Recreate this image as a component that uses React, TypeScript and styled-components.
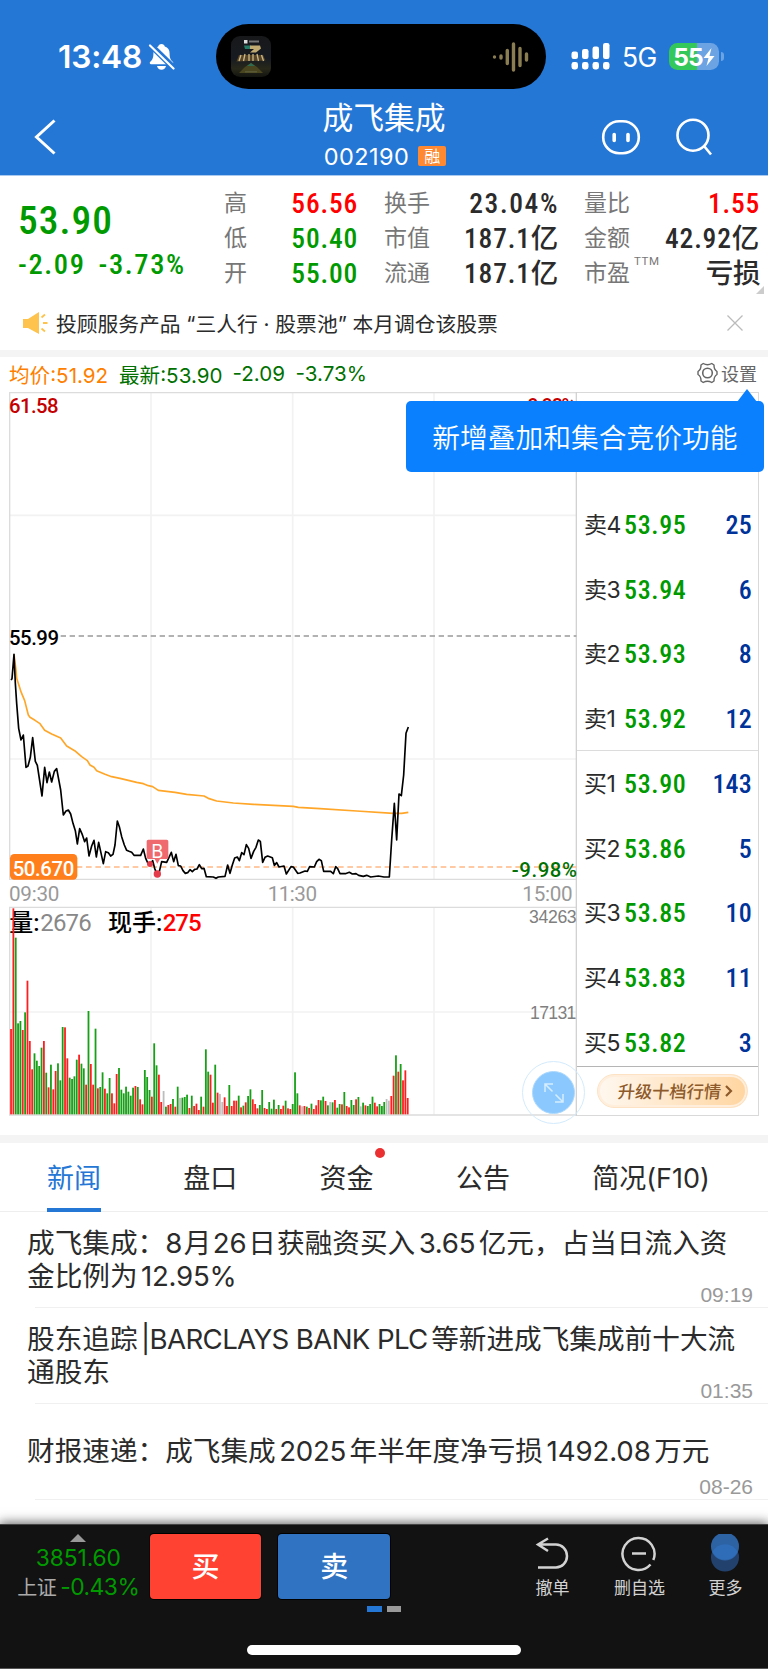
import React from "react";
import styled, { createGlobalStyle } from "styled-components";

const UI = `Inter, "Noto Sans CJK SC", sans-serif`;
const NUM = `Roboto, "Noto Sans CJK SC", sans-serif`;

const C = {
  blue: "#2577d6",
  green: "#009a00",
  darkGreen: "#007000",
  red: "#ff0000",
  orange: "#ff7f1c",
  ink: "#2b2b2b",
};

const GlobalStyle = createGlobalStyle`
  * { box-sizing: border-box; }
  body { margin: 0; background: #fff; font-family: ${UI}; color: ${C.ink}; }
`;

const Page = styled.div`
  width: 768px;
  height: 1669px;
  display: flex;
  flex-direction: column;
  overflow: hidden;
  white-space: nowrap;
`;

/* ---------- header ---------- */
const Header = styled.header`
  height: 176px;
  background: ${C.blue};
  border-bottom: 1px solid #a9c9ee;
  color: #fff;
`;
const StatusBar = styled.div`
  display: flex;
  align-items: center;
  height: 89px;
  padding: 24px 0 0 58px;
`;
const Clock = styled.div`
  display: flex;
  align-items: center;
  gap: 6px;
  width: 157.5px;
  font-size: 31.7px;
  font-weight: 600;
  letter-spacing: -0.2px;
`;
const Island = styled.div`
  display: flex;
  align-items: center;
  justify-content: space-between;
  width: 330.5px;
  height: 65px;
  padding: 0 17px 0 15px;
  border-radius: 33px;
  background: #000;
`;
const Signals = styled.div`
  display: flex;
  align-items: center;
  padding-left: 25px;
  font-size: 26.5px;
`;
const Network = styled.span`
  width: 47px;
  margin-left: 12px;
  letter-spacing: -0.6px;
`;
const Battery = styled.div`
  display: flex;
  align-items: center;
  justify-content: center;
  width: 50px;
  height: 27px;
  border-radius: 8.5px;
  background: linear-gradient(90deg, #34c759 0 55%, #6ba3e3 55%);
  font-size: 24.5px;
  font-weight: 700;
  letter-spacing: -0.8px;
`;
const BatteryCap = styled.div`
  width: 3px;
  height: 9px;
  margin-left: 1.5px;
  border-radius: 0 4px 4px 0;
  background: #6ba3e3;
`;
const NavBar = styled.div`
  display: grid;
  grid-template-columns: 1fr auto 1fr;
  align-items: center;
  height: 86px;
  padding: 10px 55px 0 33px;
`;
const NavTitle = styled.div`
  display: flex;
  flex-direction: column;
  align-items: center;
  margin-left: 22px;
`;
const StockName = styled.div`
  height: 38px;
  line-height: 38px;
  font-size: 30.8px;
`;
const StockCode = styled.div`
  display: flex;
  align-items: center;
  gap: 9px;
  height: 38px;
  padding-left: 2px;
  font-size: 23.5px;
  letter-spacing: 0.45px;
`;
const MarginBadge = styled.span`
  width: 28px;
  height: 20px;
  border-radius: 2px;
  background: #ff8833;
  font-size: 16px;
  line-height: 20px;
  letter-spacing: 0;
  text-align: center;
`;
const NavActions = styled.div`
  display: flex;
  justify-content: flex-end;
  align-items: center;
  gap: 34px;
`;

/* ---------- quote ---------- */
const QuoteWrap = styled.div`
  position: relative;
`;
const Quote = styled.section`
  display: flex;
  height: 124px;
  padding: 9.5px 9px 0 18px;
  font-family: ${NUM};
  font-stretch: 87%;
`;
const QuoteMain = styled.div`
  width: 206px;
  color: ${C.green};
  font-weight: 500;
`;
const LastPrice = styled.div`
  height: 57px;
  padding-top: 6px;
  font-size: 39.5px;
  line-height: 57px;
  letter-spacing: 1px;
`;
const Changes = styled.div`
  display: flex;
  gap: 13px;
  padding-top: 6px;
  font-size: 28.5px;
  line-height: 32px;
  letter-spacing: 1.6px;
`;
const StatColumn = styled.dl<{ $width: number; $gap: number }>`
  width: ${(p) => p.$width}px;
  margin: 0 ${(p) => p.$gap}px 0 0;
`;
const Stat = styled.div`
  display: flex;
  justify-content: space-between;
  align-items: center;
  height: 35px;
`;
const StatLabel = styled.dt`
  display: flex;
  color: #777;
  font-size: 23px;
  line-height: 35px;
`;
const Sup = styled.small`
  padding-left: 4px;
  font-size: 11.5px;
  font-stretch: 100%;
  line-height: 10px;
  letter-spacing: 0.6px;
`;
const StatValue = styled.dd<{ $color?: string; $track?: number }>`
  margin: 0 -1px 0 0;
  color: ${(p) => p.$color ?? C.ink};
  font-size: 27.5px;
  font-weight: 500;
  line-height: 35px;
  letter-spacing: ${(p) => p.$track ?? 0.8}px;
`;
const Corner = styled.i`
  position: absolute;
  right: 4px;
  bottom: 6px;
  border: 4px solid #ccc;
  border-top-color: transparent;
  border-left-color: transparent;
`;

const Notice = styled.div`
  display: flex;
  align-items: center;
  height: 50px;
  padding: 0 25px 4px 22px;
  font-size: 20.75px;
`;
const NoticeText = styled.span`
  flex: 1;
  margin-left: 7px;
`;
const Band = styled.div<{ $height: number }>`
  flex: none;
  height: ${(p) => p.$height}px;
  background: #f4f4f4;
`;

/* ---------- chart ---------- */
const ChartInfo = styled.div`
  display: flex;
  align-items: center;
  height: 35px;
  padding: 0 11px 2px 9px;
  color: ${C.darkGreen};
  font-size: 20.6px;
`;
const InfoItem = styled.span<{ $width: number; $color?: string }>`
  width: ${(p) => p.$width}px;
  color: ${(p) => p.$color ?? "inherit"};
`;
const Settings = styled.div`
  display: flex;
  align-items: center;
  gap: 3px;
  margin-left: auto;
  padding-bottom: 2px;
  color: #666;
  font-size: 18px;
`;
const ChartArea = styled.section`
  position: relative;
  display: flex;
  height: 743px;
  padding-left: 9px;
`;
const Plot = styled.svg`
  flex: none;
  width: 568px;
  height: 724px;
  font-family: ${NUM};
  font-stretch: 90%;
`;
const OrderBook = styled.div`
  width: 182px;
  height: 724px;
  border: 1.5px solid #d9d9d9;
  border-left: 0;
`;
const Orders = styled.div<{ $top: number; $bottom: number; $line: string }>`
  display: flex;
  flex-direction: column;
  gap: 18.7px;
  padding: ${(p) => p.$top}px 6px ${(p) => p.$bottom}px 7px;
  border-bottom: 1px solid ${(p) => p.$line};
`;
const Order = styled.div`
  display: flex;
  align-items: center;
  height: 46px;
  font-family: ${NUM};
  font-size: 26px;
  font-weight: 500;
  line-height: 46px;
`;
const OrderLabel = styled.span`
  width: 40px;
  font-family: ${UI};
  font-size: 23px;
  font-weight: 400;
  letter-spacing: -0.4px;
`;
const OrderPrice = styled.span`
  color: ${C.green};
  font-stretch: 87%;
  letter-spacing: 0.65px;
`;
const OrderQty = styled.span`
  margin-left: auto;
  color: #003399;
  font-stretch: 87%;
  letter-spacing: 0.2px;
`;
const Upgrade = styled.button`
  display: flex;
  align-items: center;
  justify-content: center;
  gap: 4px;
  width: 151px;
  height: 34px;
  margin: 7px 0 0 20px;
  padding: 0 0 0 6px;
  border: 1px solid #fde3c4;
  border-radius: 17px;
  background: linear-gradient(90deg, #fff8f0, #ffd5a0);
  box-shadow: inset 0 0 0 2px #ffeedb;
  color: #8d5a2b;
`;
const UpgradeText = styled.span`
  font: 500 17.2px ${UI};
  transform: skewX(-6deg);
`;
const Expand = styled.div`
  position: absolute;
  left: 522px;
  top: 669px;
  display: flex;
  align-items: center;
  justify-content: center;
  width: 63px;
  height: 63px;
  border: 1.5px solid #d3ebfd;
  border-radius: 50%;
`;
const ExpandDisc = styled.div`
  display: flex;
  align-items: center;
  justify-content: center;
  width: 43px;
  height: 43px;
  border: 1.5px solid #add9fd;
  border-radius: 50%;
  background: #8ac8fe;
`;
const Tip = styled.div`
  position: absolute;
  left: 406px;
  top: 9px;
  width: 358px;
  height: 71px;
  border-radius: 5px;
  background: #0a80ff;
  color: #fff;
  font-size: 27.75px;
  font-weight: 350;
  line-height: 75px;
  text-align: center;
  &::before {
    content: "";
    position: absolute;
    right: 7px;
    top: -12px;
    border: 10px solid transparent;
    border-top: 0;
    border-bottom: 13px solid #0a80ff;
  }
`;

/* ---------- tabs and news ---------- */
const Tabs = styled.nav`
  display: grid;
  grid-template-columns: repeat(4, 136.3px) auto;
  height: 69px;
  padding-left: 47px;
  border-bottom: 1px solid #eee;
`;
const Tab = styled.div<{ $active?: boolean; $dot?: boolean }>`
  position: relative;
  justify-self: start;
  height: 69px;
  border-bottom: 4px solid ${(p) => (p.$active ? C.blue : "transparent")};
  color: ${(p) => (p.$active ? C.blue : C.ink)};
  font-size: 27px;
  line-height: 71px;
  &::after {
    content: "";
    display: ${(p) => (p.$dot ? "block" : "none")};
    position: absolute;
    top: 5px;
    right: -11px;
    width: 10px;
    height: 10px;
    border-radius: 50%;
    background: #ea3030;
  }
`;
const NewsList = styled.div`
  flex: 1;
`;
const News = styled.article`
  height: 96px;
  padding: 14px 15px 0 27px;
  background: linear-gradient(#f0f0f0, #f0f0f0) 35px 95px / 100% 1px no-repeat;
`;
const NewsTitle = styled.div`
  display: flex;
  flex-direction: column;
  justify-content: center;
  height: 67px;
  font-size: 27.65px;
  line-height: 33px;
`;
const En = styled.span<{ $track?: number; $gap?: number }>`
  margin: 0 ${(p) => p.$gap ?? 3.5}px;
  letter-spacing: ${(p) => p.$track ?? -0.3}px;
`;
const NewsTime = styled.div`
  margin-top: -10px;
  color: #999;
  font-family: "Liberation Sans", sans-serif;
  font-size: 21px;
  line-height: 24px;
  text-align: right;
`;

/* ---------- bottom bar ---------- */
const BottomBar = styled.footer`
  flex: none;
  display: flex;
  flex-direction: column;
  align-items: center;
  height: 145px;
  border-top: 1px solid #444;
  border-bottom: 1px solid #555;
  background: #121212;
  box-shadow: 0 0 11px 1px rgba(0, 0, 0, 0.65);
`;
const BarRow = styled.div`
  display: flex;
  width: 100%;
  height: 81px;
  padding-top: 9px;
`;
const Index = styled.div`
  display: flex;
  flex-direction: column;
  align-items: center;
  width: 150px;
  padding-left: 7px;
  color: ${C.green};
  font-size: 22.8px;
  line-height: 28.5px;
  letter-spacing: -0.1px;
`;
const IndexArrow = styled.svg`
  flex: none;
  width: 16px;
  height: 8px;
  margin-bottom: 2px;
`;
const IndexChange = styled.span`
  letter-spacing: -0.5px;
`;
const IndexName = styled.span`
  margin-right: 4px;
  color: #aaa;
  font-size: 20px;
`;
const TradeButton = styled.button<{ $color: string }>`
  width: 112px;
  height: 65px;
  margin-right: 17px;
  padding: 0;
  border: 0;
  border-radius: 4px;
  background: ${(p) => p.$color};
  box-shadow: 0 0 0 1px #000;
  color: #fff;
  font: 500 28px/62px ${UI};
`;
const Actions = styled.div`
  display: grid;
  grid-template-columns: 87px 87px 85px;
  margin-left: 102px;
`;
const Action = styled.div`
  display: flex;
  flex-direction: column;
  align-items: center;
  gap: 2px;
  color: #d2d2d2;
  font-size: 17px;
  line-height: 26px;
`;
const Pager = styled.div`
  display: flex;
  gap: 5px;
  height: 6px;
`;
const PagerDot = styled.i<{ $active?: boolean }>`
  width: 14.5px;
  background: ${(p) => (p.$active ? C.blue : "#999")};
`;
const HomeIndicator = styled.div`
  width: 274px;
  height: 9.5px;
  margin-top: 33px;
  border-radius: 5px;
  background: #fff;
`;

/* ---------- data; chart units are thirds of a pixel ---------- */
const PRICE =
  "33,180 36,176 42,103 46,190 50,250 56,325 63,360 70,345 78,442 84,438 91,412 98,353 106,424 112,436 126,528 134,442 141,488 148,456 155,486 163,454 170,446 182,510 190,585 198,573 205,570 212,582 219,610 226,632 232,672 239,626 247,644 254,665 260,654 267,708 275,678 282,661 289,711 296,667 310,731 317,695 325,698 332,708 339,703 345,675 352,603 358,620 365,650 373,675 380,691 387,694 395,697 402,706 422,706 430,687 437,715 444,730 450,735 458,722 464,745 471,763 478,755 485,725 500,727 507,712 514,697 521,725 528,703 535,737 542,738 549,752 556,760 563,758 570,749 577,755 584,748 591,747 598,734 605,746 612,745 619,770 640,771 648,775 655,771 675,769 683,735 690,760 697,735 704,714 712,711 718,722 725,698 732,704 739,674 746,685 753,715 761,694 768,682 775,660 781,664 788,727 795,712 803,708 817,713 823,736 830,728 837,741 852,738 859,762 873,740 880,741 893,760 900,759 915,753 922,754 929,740 943,741 950,725 957,718 964,722 971,754 992,754 1000,761 1007,740 1013,746 1020,761 1036,761 1048,757 1057,762 1068,761 1076,766 1090,769 1100,766 1112,771 1135,768 1152,771 1168,771 1175,660 1183,550 1190,660 1197,522 1204,527 1211,465 1218,340 1225,321";
const AVERAGE =
  "42,103 48,150 50,175 64,218 74,242 85,285 90,292 105,301 120,311 134,331 155,342 182,354 200,378 224,392 245,410 262,422 270,435 282,442 290,452 315,463 335,470 360,475 410,487 430,491 445,497 458,500 475,511 525,517 560,523 612,528 625,535 650,543 700,549 760,553 880,559 895,562 960,566 1070,573 1180,580 1205,580 1225,577";
const VOLUME =
  "417r 55r 143g 400g 393g 420r 367g 272r 453r 538r 490g 512g 528g 473g 453r 548g 592r 524g 598r 543r 520g 571g 411g 412r 505r 563g 567g 559g 509g 494r 521g 535g 584r 363g 522r 584r 416g 595r 591g 547g 596r 610g 564g 610r 640r 552r 534g 599g 610g 590g 605g 617g 593g 588r 591g 628r 643r 540g 561g 600g 620r 460g 526g 554r 636r 603x 650g 645r 642r 627g 650r 590g 624x 623g 621g 614g 654r 617g 648r 641r 660r 620g 650r 478g 545g 554r 638r 524g 608r 612x 636x 622r 648r 585g 648r 632r 632r 617g 652r 647g 637r 618g 598g 628r 642r 655r 645g 600g 654r 657r 636g 656g 629g 657r 645g 657r 647r 632g 655r 657r 642g 547g 610g 646r 649x 648r 650g 654r 641g 657r 646r 630r 631g 620g 633r 646g 636x 637g 630r 653g 642g 643r 606g 648r 652r 630g 645g 628r 621g 649x 638g 646r 648g 642g 620g 638r 649r 642g 648g 636g 627x 632x 618r 557r 496g 545r 522g 571r 541r 624r".split(
    " "
  );
const BAR_COLOR: Record<string, string> = { r: "#ff1e1e", g: "#17a017", x: "#bdbdbd" };
const BAR_STEP = 1190 / (VOLUME.length - 1);

const SELLS = [
  ["卖4", "53.95", "25"],
  ["卖3", "53.94", "6"],
  ["卖2", "53.93", "8"],
  ["卖1", "53.92", "12"],
];
const BUYS = [
  ["买1", "53.90", "143"],
  ["买2", "53.86", "5"],
  ["买3", "53.85", "10"],
  ["买4", "53.83", "11"],
  ["买5", "53.82", "3"],
];

const OrderRows = ({ rows }: { rows: string[][] }) => (
  <>
    {rows.map(([label, price, qty]) => (
      <Order key={label}>
        <OrderLabel>{label}</OrderLabel>
        <OrderPrice>{price}</OrderPrice>
        <OrderQty>{qty}</OrderQty>
      </Order>
    ))}
  </>
);

const StockChart = () => (
  <Plot viewBox="27 1176 1704 2172" fontWeight={500} fontSize={61}>
    <g fill="none" stroke="#f2f2f2" strokeWidth="5">
      <path d="M28 1546H1729M28 2277H1729M28 3036H1729" />
      <path d="M453 1178V2638M453 2722V3344M878 1178V2638M878 2722V3344M1302 1178V2638M1302 2722V3344" />
    </g>
    <g fill="none" stroke="#dcdcdc" strokeWidth="4">
      <path d="M27 1178H1729M27 2638H1729M27 2722H1729M27 3345H1731M29 1178V2638M29 2722V3345" />
      <path d="M1729 1176V3348" stroke="#d2d2d2" />
    </g>
    <path d="M182 1908H1729" stroke="#999" strokeWidth="4.500" strokeDasharray="16 11" />
    <path d="M230 2601H1729" stroke="#ffb887" strokeWidth="4.500" strokeDasharray="17 11" />

    <g transform="translate(0 1860)" fill="none" strokeLinejoin="round">
      <polyline points={AVERAGE} stroke="#ffa629" strokeWidth="5" />
      <polyline points={PRICE} stroke="#000" strokeWidth="5" />
    </g>

    <text x="27" y="1238" fill="#c40000" textLength="149">61.58</text>
    <text x="1582" y="1238" fill="#c40000" textLength="147">9.98%</text>
    <text x="27" y="1935" fill="#000" textLength="150">55.99</text>

    <rect x="30" y="2562" width="202" height="77" rx="13" fill={C.orange} />
    <text x="38" y="2628" fill="#fff" textLength="185">50.670</text>
    <text x="1535" y="2631" fill={C.darkGreen} textLength="196">-9.98%</text>

    <circle cx="450" cy="2592" r="9" fill="#e43b4a" />
    <circle cx="472" cy="2622" r="11" fill="#e43b4a" />
    <path d="M445 2519h55a5 5 0 0 1 5 5v48a5 5 0 0 1-5 5h-20l-8 14-8-14h-19a5 5 0 0 1-5-5v-48a5 5 0 0 1 5-5z" fill="#ee6a6e" />
    <text x="472" y="2574" fill="#fff" fontSize="55" fontWeight="400" fontFamily={UI} textAnchor="middle">B</text>

    <g fill="#999" fontWeight="400" fontSize="62">
      <text x="27" y="2703" textLength="151">09:30</text>
      <text x="803" y="2703" textLength="148">11:30</text>
      <text x="1567" y="2703" textLength="151">15:00</text>
    </g>

    <g fontSize="72" fontWeight="500">
      <text x="28" y="2793" fill="#000">量:</text>
      <text x="121" y="2793" fill="#888" fontWeight="400" textLength="154">2676</text>
      <text x="324" y="2793" fill="#000">现手:</text>
      <text x="488" y="2793" fill={C.red} textLength="117">275</text>
    </g>

    <g transform="translate(0 2670)">
      {VOLUME.map((bar, i) => {
        const top = parseInt(bar, 10);
        return (
          <rect
            key={i}
            x={30.4 + i * BAR_STEP}
            y={top}
            width="5.400"
            height={673 - top}
            fill={BAR_COLOR[bar.slice(-1)]}
          />
        );
      })}
    </g>
    <g fill="#808080" fontFamily="Liberation Sans" fontWeight="400" fontSize="53">
      <text x="1587" y="2769" textLength="143">34263</text>
      <text x="1590" y="3057" textLength="139">17131</text>
    </g>
  </Plot>
);

const BellOff = () => (
  <svg width="27" height="28" viewBox="0 0 27 28">
    <path d="M13.5 1c1.8 0 3 1 3.3 2.4 3.200 1 4.800 3.600 4.800 7 0 4.800 1.200 6.600 3.200 8.400.9.900.4 2.400-.9 2.400H3.100c-1.300 0-1.800-1.500-.9-2.400 2-1.800 3.200-3.600 3.200-8.400 0-3.400 1.600-6 4.800-7C10.500 2 11.700 1 13.500 1zM9 23h9c-.5 2.300-2.200 3.800-4.500 3.800S9.500 25.300 9 23z" fill="#fff" />
    <path d="M2 1.500l24 23.500" stroke={C.blue} strokeWidth="6" />
    <path d="M2 2.500l23.500 23" stroke="#fff" strokeWidth="2.200" strokeLinecap="round" />
  </svg>
);

const AlbumArt = () => (
  <svg width="40" height="41" viewBox="0 0 40 41">
    <defs>
      <linearGradient id="art" x1="0" y1="0" x2="0" y2="1">
        <stop offset="0" stopColor="#17181a" />
        <stop offset="0.55" stopColor="#171b21" />
        <stop offset="0.8" stopColor="#28281a" />
        <stop offset="1" stopColor="#12140f" />
      </linearGradient>
    </defs>
    <rect width="40" height="41" rx="9" fill="url(#art)" />
    <path d="M13 4h3.500v3.500H13z" fill="#ddd" />
    <path d="M18 4.500h10v2H18z" fill="#777" />
    <path d="M13 9.500h7v3.500h-6z" fill="#257a68" />
    <path d="M19 9.500h10l1 3-5 4h-6l4-3.500h-4z" fill="#c2ab72" />
    <path d="M8 19h24l2.500 5.500-29 1z" fill="#57452a" />
    <path d="M10 19l-2 6M14 18l-1.500 7M18 18v7M22 18v7M26 18l1.500 7M30.500 19l2 6" stroke="#cdb985" strokeWidth="1.300" />
    <path d="M20 27l6 4 6 6H8l6-6z" fill="#48451f" />
    <path d="M20 27l-4 3h8z" fill="#2f6b50" />
    <path d="M14 35h12v1.500H14z" fill="#5a5936" />
  </svg>
);

const SoundWave = () => (
  <svg width="37" height="30" viewBox="0 0 37 30" stroke="#8b7d52" strokeWidth="3.400" strokeLinecap="round">
    <path d="M2.500 15v.1M9 14v2M15.300 8.500v13M21.500 2v26M28 6.500v17M34.500 12v6" />
  </svg>
);

const SignalBars = () => (
  <svg width="39" height="27" viewBox="0 0 39 27" fill="#fff">
    <rect x="0.500" y="8.500" width="6.500" height="7.500" rx="2.200" />
    <rect x="11" y="6" width="6.500" height="10" rx="2.200" />
    <rect x="21.500" y="3.500" width="6.500" height="12.500" rx="2.200" />
    <rect x="32" y="0" width="6.500" height="16" rx="2.200" />
    {[0.5, 11, 21.5, 32].map((x) => (
      <rect key={x} x={x} y="19" width="6.500" height="7.500" rx="2.400" />
    ))}
  </svg>
);

const GearIcon = () => (
  <svg width="21" height="22" viewBox="0 0 21 22" fill="none" stroke="#666" strokeWidth="1.400" strokeLinejoin="round">
    <path d="M6.200 1.500Q10.500 4 14.800 1.500L17 3Q16.800 7.500 20 9.500V12.500Q16.800 14.500 17 19L14.800 20.500Q10.500 18 6.200 20.500L4 19Q4.200 14.500 1 12.500V9.500Q4.200 7.500 4 3Z" />
    <circle cx="10.500" cy="11" r="4.800" strokeWidth="1.600" />
  </svg>
);

const App = () => (
  <Page>
    <GlobalStyle />
    <Header>
      <StatusBar>
        <Clock>
          13:48
          <BellOff />
        </Clock>
        <Island>
          <AlbumArt />
          <SoundWave />
        </Island>
        <Signals>
          <SignalBars />
          <Network>5G</Network>
          <Battery>
            55
            <svg width="12" height="20" viewBox="0 0 12 20">
              <path d="M8.500 1L.5 11h5L3.500 19l8-10h-5z" fill="#fff" />
            </svg>
          </Battery>
          <BatteryCap />
        </Signals>
      </StatusBar>
      <NavBar>
        <svg width="24" height="36" viewBox="0 0 24 36" fill="none" stroke="#fff" strokeWidth="3">
          <path d="M21.500 1.500L3.500 18l18 16.500" />
        </svg>
        <NavTitle>
          <StockName>成飞集成</StockName>
          <StockCode>
            002190<MarginBadge>融</MarginBadge>
          </StockCode>
        </NavTitle>
        <NavActions>
          <svg width="40" height="36" viewBox="0 0 40 36" fill="none" stroke="#fff">
            <rect x="2.200" y="2.200" width="35.600" height="32" rx="16" strokeWidth="2.600" />
            <path d="M13.200 15.500v6M27 15.500v6" strokeWidth="3.600" strokeLinecap="round" />
          </svg>
          <svg width="38" height="38" viewBox="0 0 38 38" fill="none" stroke="#fff" strokeWidth="2.600">
            <circle cx="18" cy="17.200" r="15.500" />
            <path d="M29 28l7 8.500" />
          </svg>
        </NavActions>
      </NavBar>
    </Header>

    <QuoteWrap>
      <Quote>
        <QuoteMain>
          <LastPrice>53.90</LastPrice>
          <Changes>
            <span>-2.09</span>
            <span>-3.73%</span>
          </Changes>
        </QuoteMain>
        <StatColumn $width={133} $gap={27}>
          <Stat><StatLabel>高</StatLabel><StatValue $color={C.red}>56.56</StatValue></Stat>
          <Stat><StatLabel>低</StatLabel><StatValue $color={C.green}>50.40</StatValue></Stat>
          <Stat><StatLabel>开</StatLabel><StatValue $color={C.green}>55.00</StatValue></Stat>
        </StatColumn>
        <StatColumn $width={174} $gap={26}>
          <Stat><StatLabel>换手</StatLabel><StatValue $track={1.6}>23.04%</StatValue></Stat>
          <Stat><StatLabel>市值</StatLabel><StatValue>187.1亿</StatValue></Stat>
          <Stat><StatLabel>流通</StatLabel><StatValue>187.1亿</StatValue></Stat>
        </StatColumn>
        <StatColumn $width={175} $gap={0}>
          <Stat><StatLabel>量比</StatLabel><StatValue $color={C.red}>1.55</StatValue></Stat>
          <Stat><StatLabel>金额</StatLabel><StatValue>42.92亿</StatValue></Stat>
          <Stat><StatLabel>市盈<Sup>TTM</Sup></StatLabel><StatValue $track={-0.4}>亏损</StatValue></Stat>
        </StatColumn>
      </Quote>
      <Corner />
    </QuoteWrap>

    <Notice>
      <svg width="27" height="22" viewBox="0 0 27 22">
        <path d="M1 7h5L17 0v22L6 16H1z" fill="#fdc34c" />
        <path d="M19.500 5.500L23 2.500M21 11h4.500M19.500 16.500l3.500 3" stroke="#fdc34c" strokeWidth="1.800" />
      </svg>
      <NoticeText>投顾服务产品 “三人行 · 股票池” 本月调仓该股票</NoticeText>
      <svg width="16" height="16" viewBox="0 0 16 16" stroke="#bbb" strokeWidth="1.300">
        <path d="M.5.500l15 15M15.500.500l-15 15" />
      </svg>
    </Notice>
    <Band $height={7} />

    <ChartInfo>
      <InfoItem $width={110} $color="#ff7f00">均价:51.92</InfoItem>
      <InfoItem $width={113.5}>最新:53.90</InfoItem>
      <InfoItem $width={63}>-2.09</InfoItem>
      <InfoItem $width={80}>-3.73%</InfoItem>
      <Settings>
        <GearIcon />
        设置
      </Settings>
    </ChartInfo>
    <ChartArea>
      <StockChart />
      <OrderBook>
        <Orders $top={109} $bottom={7.5} $line="#dcdcdc">
          <OrderRows rows={SELLS} />
        </Orders>
        <Orders $top={10.5} $bottom={0} $line="#b5b5b5">
          <OrderRows rows={BUYS} />
        </Orders>
        <Upgrade>
          <UpgradeText>升级十档行情</UpgradeText>
          <svg width="8" height="12" viewBox="0 0 8 12" fill="none" stroke="#8d5a2b" strokeWidth="2.200">
            <path d="M1 1l5 5-5 5" />
          </svg>
        </Upgrade>
      </OrderBook>
      <Expand>
        <ExpandDisc>
          <svg width="20" height="20" viewBox="0 0 20 20" fill="none" stroke="#d5edff" strokeWidth="1.500">
            <path d="M8.500 8.500L1 1M1 9V1h8M11.500 11.500L19 19M19 11v8h-8" />
          </svg>
        </ExpandDisc>
      </Expand>
      <Tip>新增叠加和集合竞价功能</Tip>
    </ChartArea>
    <Band $height={8} />

    <Tabs>
      <Tab $active>新闻</Tab>
      <Tab>盘口</Tab>
      <Tab $dot>资金</Tab>
      <Tab>公告</Tab>
      <Tab>简况(F10)</Tab>
    </Tabs>
    <NewsList>
      <News>
        <NewsTitle>
          <span>成飞集成：8<En $gap={1.5}>月</En>26<En $gap={1.5}>日</En>获融资买入<En>3.65</En>亿元，占当日流入资</span>
          <span>金比例为<En>12.95%</En></span>
        </NewsTitle>
        <NewsTime>09:19</NewsTime>
      </News>
      <News>
        <NewsTitle>
          <span>股东追踪<En $track={-0.65}>|BARCLAYS BANK PLC</En>等新进成飞集成前十大流</span>
          <span>通股东</span>
        </NewsTitle>
        <NewsTime>01:35</NewsTime>
      </News>
      <News>
        <NewsTitle>
          <span>财报速递：成飞集成<En>2025</En>年半年度净亏损<En $track={-0.1}>1492.08</En>万元</span>
        </NewsTitle>
        <NewsTime>08-26</NewsTime>
      </News>
    </NewsList>

    <BottomBar>
      <BarRow>
        <Index>
          <IndexArrow viewBox="0 0 16 8">
            <path d="M0 8l8-8 8 8z" fill="#999" />
          </IndexArrow>
          <span>3851.60</span>
          <IndexChange><IndexName>上证</IndexName>-0.43%</IndexChange>
        </Index>
        <TradeButton $color="#ff4232">买</TradeButton>
        <TradeButton $color="#3073c3">卖</TradeButton>
        <Actions>
          <Action>
            <svg width="34" height="39" viewBox="0 0 34 39" fill="none" stroke="#d2d2d2" strokeWidth="2.500">
              <path d="M3 10.500h18a11 11.500 0 0 1 0 23H3M13 4.500L3 10.500l10 6.500" />
            </svg>
            撤单
          </Action>
          <Action>
            <svg width="36" height="39" viewBox="0 0 36 39" fill="none" stroke="#d2d2d2" strokeWidth="2.500">
              <path d="M32.300 26A16 16 0 1 0 29.500 30.500M11 19.500h14" />
            </svg>
            删自选
          </Action>
          <Action>
            <svg width="30" height="39" viewBox="0 0 30 39">
              <circle cx="15" cy="23.500" r="14" fill="#22426d" />
              <circle cx="15" cy="12.500" r="14" fill="#2d62a3" />
              <path d="M2.500 18a14 14 0 0 1 25 0a14 14 0 0 1-25 0z" fill="#2f6db8" />
            </svg>
            更多
          </Action>
        </Actions>
      </BarRow>
      <Pager>
        <PagerDot $active />
        <PagerDot />
      </Pager>
      <HomeIndicator />
    </BottomBar>
  </Page>
);

export default App;
